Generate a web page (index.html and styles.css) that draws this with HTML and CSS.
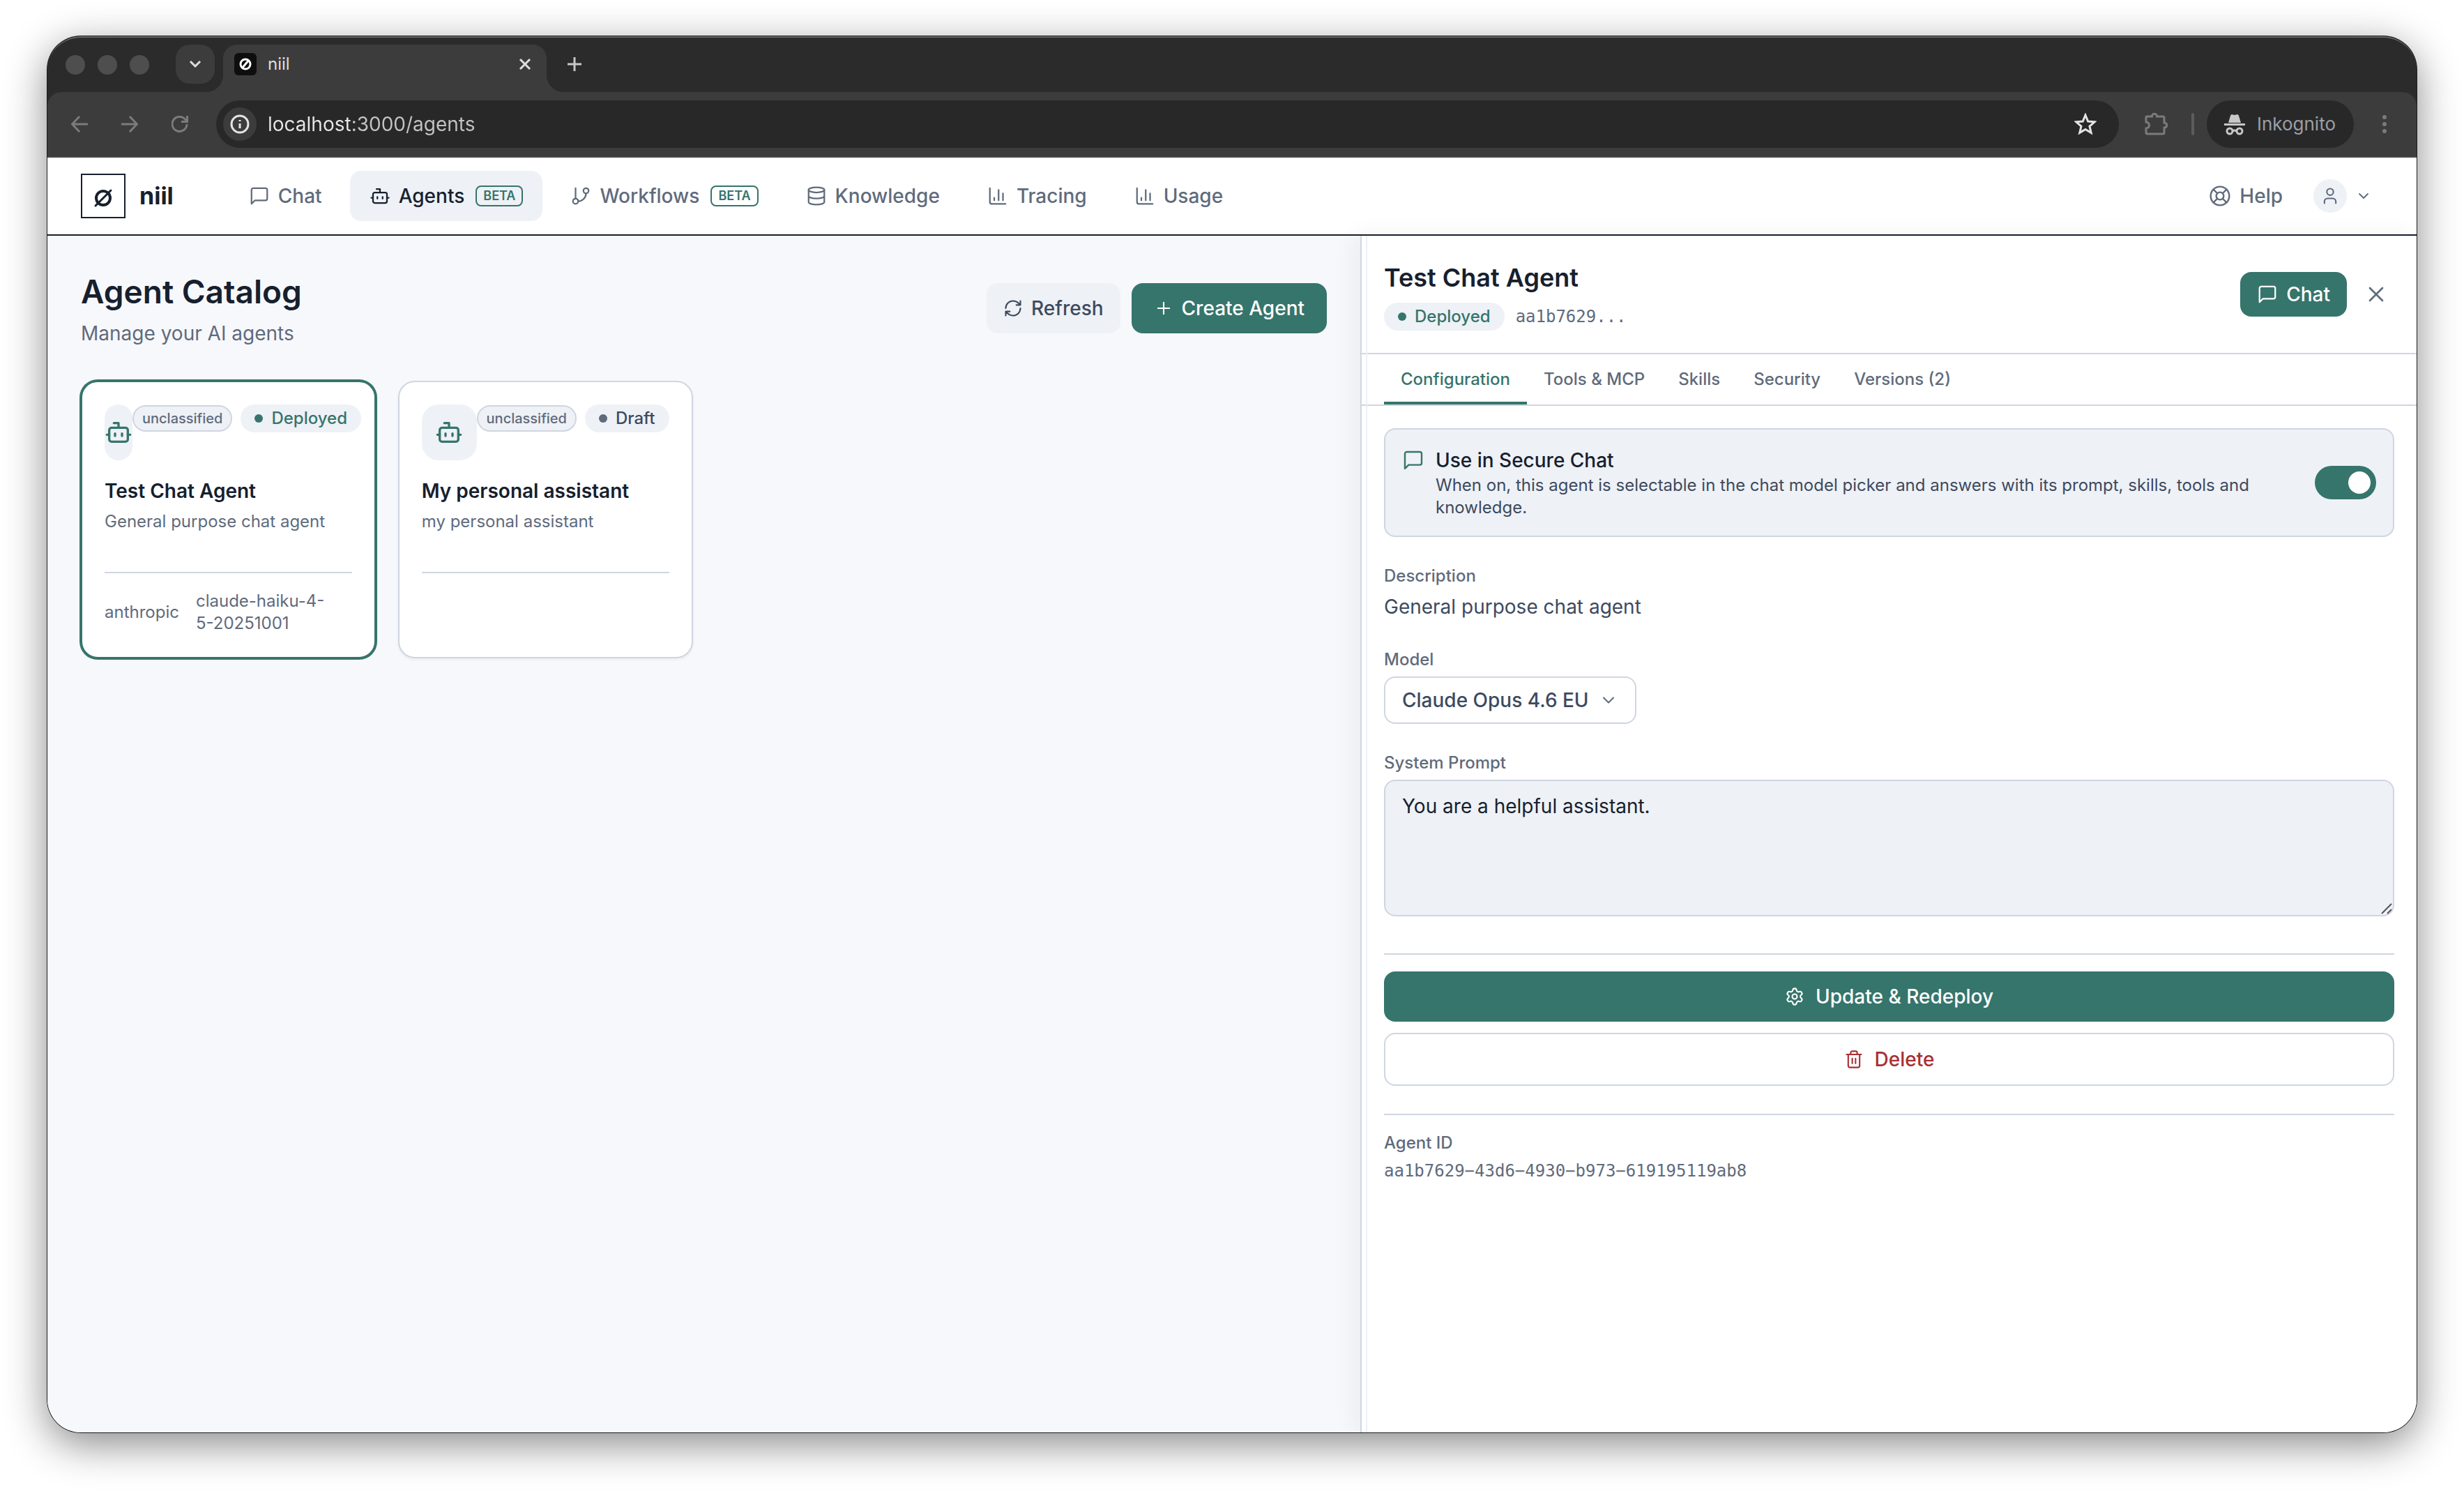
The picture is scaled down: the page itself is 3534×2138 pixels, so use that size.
FILE: index.html
```html
<!DOCTYPE html>
<html lang="en">
<head>
<meta charset="utf-8">
<title>niil</title>
<link rel="stylesheet" href="styles.css">
</head>
<body>
<svg class="sprite" aria-hidden="true">
  <symbol id="chat" viewBox="0 0 24 24"><path d="M21 15a2 2 0 0 1-2 2H7l-4 4V5a2 2 0 0 1 2-2h14a2 2 0 0 1 2 2z"/></symbol>
  <symbol id="bot" viewBox="0 0 24 24"><path d="M12 8V4H8"/><rect x="4" y="8" width="16" height="12" rx="2"/><path d="M2 14h2M20 14h2M15 13v2M9 13v2"/></symbol>
  <symbol id="branch" viewBox="0 0 24 24"><path d="M6 3v12"/><circle cx="18" cy="6" r="3"/><circle cx="6" cy="18" r="3"/><path d="M18 9a9 9 0 0 1-9 9"/></symbol>
  <symbol id="database" viewBox="0 0 24 24"><ellipse cx="12" cy="5" rx="9" ry="3"/><path d="M3 5v14a9 3 0 0 0 18 0V5M3 12a9 3 0 0 0 18 0"/></symbol>
  <symbol id="chart" viewBox="0 0 24 24"><path d="M3 3v16a2 2 0 0 0 2 2h16M18 17V9M13 17V5M8 17v-3"/></symbol>
  <symbol id="buoy" viewBox="0 0 24 24"><circle cx="12" cy="12" r="10"/><circle cx="12" cy="12" r="4"/><path d="m4.93 4.93 4.24 4.24M14.83 9.17l4.24-4.24M14.83 14.83l4.24 4.24M9.17 14.83l-4.24 4.24"/></symbol>
  <symbol id="user" viewBox="0 0 24 24"><path d="M19 21v-2a4 4 0 0 0-4-4H9a4 4 0 0 0-4 4v2"/><circle cx="12" cy="7" r="4"/></symbol>
  <symbol id="down" viewBox="0 0 24 24"><path d="m6 9 6 6 6-6"/></symbol>
  <symbol id="refresh" viewBox="0 0 24 24"><path d="M3 12a9 9 0 0 1 9-9 9.75 9.75 0 0 1 6.74 2.74L21 8M21 3v5h-5M21 12a9 9 0 0 1-9 9 9.75 9.75 0 0 1-6.74-2.74L3 16M8 16H3v5"/></symbol>
  <symbol id="plus" viewBox="0 0 24 24"><path d="M5 12h14M12 5v14"/></symbol>
  <symbol id="cross" viewBox="0 0 24 24"><path d="M18 6 6 18M6 6l12 12"/></symbol>
  <symbol id="gear" viewBox="0 0 24 24"><path d="M9.671 4.136a2.34 2.34 0 0 1 4.659 0 2.34 2.34 0 0 0 3.319 1.915 2.34 2.34 0 0 1 2.33 4.033 2.34 2.34 0 0 0 0 3.831 2.34 2.34 0 0 1-2.33 4.033 2.34 2.34 0 0 0-3.319 1.915 2.34 2.34 0 0 1-4.659 0 2.34 2.34 0 0 0-3.32-1.915 2.34 2.34 0 0 1-2.33-4.033 2.34 2.34 0 0 0 0-3.831A2.34 2.34 0 0 1 6.35 6.051a2.34 2.34 0 0 0 3.319-1.915"/><circle cx="12" cy="12" r="3"/></symbol>
  <symbol id="trash" viewBox="0 0 24 24"><path d="M3 6h18M19 6v14a2 2 0 0 1-2 2H7a2 2 0 0 1-2-2V6M8 6V4a2 2 0 0 1 2-2h4a2 2 0 0 1 2 2v2M10 11v6M14 11v6"/></symbol>
</svg>

<div class="window">
  <div class="tabstrip">
    <div class="lights"><span></span><span></span><span></span></div>
    <button class="tab-search" aria-label="Search tabs"><svg width="18" height="18" viewBox="0 0 18 18"><path d="m2 5 7 7 7-7"/></svg></button>
    <div class="tab">
      <svg class="favicon" viewBox="0 0 32 32"><rect width="32" height="32" rx="6"/><circle cx="16" cy="16" r="7"/><path d="m11 22 10-12"/></svg>
      <span class="tab-title">niil</span>
      <button class="plain" aria-label="Close tab"><svg width="18" height="18" viewBox="0 0 18 18"><path d="m2 2 14 14M16 2 2 16"/></svg></button>
    </div>
    <button class="plain new-tab" aria-label="New tab"><svg width="20" height="20" viewBox="0 0 20 20"><path d="M10 0v20M0 10h20"/></svg></button>
  </div>

  <div class="toolbar">
    <div class="history">
      <button class="plain" aria-label="Back"><svg width="24" height="24" viewBox="0 0 24 24"><path d="M24 12H2M12 1 1.500 12 12 23"/></svg></button>
      <button class="plain" aria-label="Forward"><svg width="24" height="24" viewBox="0 0 24 24"><path d="M0 12h22M12 1l10.500 11L12 23"/></svg></button>
      <button class="plain" aria-label="Reload"><svg width="24" height="24" viewBox="0 0 24 24"><path d="M22 12a10.500 10.500 0 1 1-3-7.500L22 7.500M22.500 0v8.500H14"/></svg></button>
    </div>
    <div class="omnibox">
      <button class="site-info" aria-label="Site information"><svg width="28" height="28" viewBox="0 0 28 28"><circle cx="14" cy="14" r="12"/><path d="M14 13v7M14 8v2"/></svg></button>
      <input class="url" type="text" aria-label="Address" value="localhost:3000/agents">
      <button class="plain star" aria-label="Bookmark"><svg width="32" height="32" viewBox="0 0 32 32"><path d="m16 3 3.700 9 9.500.8-7.200 6.200 2.200 9.400L16 23.400l-8.200 5 2.200-9.400-7.200-6.200 9.500-.8z"/></svg></button>
    </div>
    <button class="plain puzzle" aria-label="Extensions"><svg width="34" height="34" viewBox="0 0 34 34"><path d="M4 6h7.500c0-5 7-5 7 0H27q2 0 2 2v7c5 0 5 7 0 7v7q0 2-2 2H5q-2 0-2-2v-6c6-1 6-8 0-9V7q0-1 1-1z"/></svg></button>
    <span class="divider"></span>
    <button class="incognito"><svg width="32" height="32" viewBox="0 0 32 32"><path class="solid" d="M1 15h30v3H1zM7 14l3-10q1-3 4-1.500 2 .8 4 0Q21 1 22 4l3 10z"/><circle cx="9" cy="26" r="4"/><circle cx="23" cy="26" r="4"/><path d="M13 26q3-2 6 0"/></svg><span>Inkognito</span></button>
    <button class="plain dots" aria-label="Menu"><svg width="8" height="28" viewBox="0 0 8 28"><circle cx="4" cy="4" r="3"/><circle cx="4" cy="14" r="3"/><circle cx="4" cy="24" r="3"/></svg></button>
  </div>

  <header class="header">
    <a class="brand" href="#">
      <svg class="logo" viewBox="0 0 64 64"><rect x="1" y="1" width="62" height="62"/><ellipse cx="32" cy="35" rx="10" ry="10"/><path d="M21 46 43 24"/></svg>
      <span>niil</span>
    </a>
    <nav class="nav">
      <a href="#"><svg class="icon"><use href="#chat"/></svg>Chat</a>
      <a href="#" class="active"><svg class="icon"><use href="#bot"/></svg>Agents<span class="beta">BETA</span></a>
      <a href="#"><svg class="icon"><use href="#branch"/></svg>Workflows<span class="beta">BETA</span></a>
      <a href="#"><svg class="icon"><use href="#database"/></svg>Knowledge</a>
      <a href="#"><svg class="icon"><use href="#chart"/></svg>Tracing</a>
      <a href="#"><svg class="icon"><use href="#chart"/></svg>Usage</a>
    </nav>
    <a class="help" href="#"><svg class="icon roomy"><use href="#buoy"/></svg>Help</a>
    <button class="account" aria-label="Account">
      <span class="avatar"><svg class="icon small"><use href="#user"/></svg></span>
      <svg class="icon tiny"><use href="#down"/></svg>
    </button>
  </header>

  <div class="body">
    <main class="catalog">
      <div class="catalog-head">
        <div>
          <h1>Agent Catalog</h1>
          <p>Manage your AI agents</p>
        </div>
        <div class="catalog-actions">
          <button class="btn soft"><svg class="icon small"><use href="#refresh"/></svg>Refresh</button>
          <button class="btn primary"><svg class="icon small"><use href="#plus"/></svg>Create Agent</button>
        </div>
      </div>
      <div class="cards">
        <article class="card selected">
          <div class="card-top">
            <span class="card-icon"><svg class="icon large"><use href="#bot"/></svg></span>
            <span class="badges"><span class="tag">unclassified</span><span class="status live">Deployed</span></span>
          </div>
          <h2>Test Chat Agent</h2>
          <p class="desc">General purpose chat agent</p>
          <div class="card-foot"><span>anthropic</span><span>claude-haiku-4-<span class="keep">5-20251001</span></span></div>
        </article>
        <article class="card">
          <div class="card-top">
            <span class="card-icon"><svg class="icon large"><use href="#bot"/></svg></span>
            <span class="badges"><span class="tag">unclassified</span><span class="status">Draft</span></span>
          </div>
          <h2>My personal assistant</h2>
          <p class="desc">my personal assistant</p>
          <div class="card-foot"></div>
        </article>
      </div>
    </main>

    <aside class="panel">
      <div class="panel-head">
        <div class="panel-title">
          <h2>Test Chat Agent</h2>
          <div class="panel-meta"><span class="status live">Deployed</span><code>aa1b7629...</code></div>
        </div>
        <button class="btn primary compact"><svg class="icon"><use href="#chat"/></svg>Chat</button>
        <button class="close" aria-label="Close panel"><svg class="icon medium"><use href="#cross"/></svg></button>
      </div>
      <div class="tabs" role="tablist">
        <button role="tab" aria-selected="true">Configuration</button>
        <button role="tab">Tools &amp; MCP</button>
        <button role="tab">Skills</button>
        <button role="tab">Security</button>
        <button role="tab">Versions (2)</button>
      </div>
      <div class="panel-body">
        <div class="option">
          <svg class="icon roomy"><use href="#chat"/></svg>
          <label for="secure"><strong>Use in Secure Chat</strong><span>When on, this agent is selectable in the chat model picker and answers with its prompt, skills, tools and knowledge.</span></label>
          <input id="secure" class="switch" type="checkbox" role="switch" checked>
        </div>
        <div class="field">
          <span class="label">Description</span>
          <p>General purpose chat agent</p>
        </div>
        <div class="field">
          <label class="label" for="model">Model</label>
          <div class="select">
            <select id="model"><option>Claude Opus 4.6 EU</option></select>
            <svg class="icon small select-arrow"><use href="#down"/></svg>
          </div>
        </div>
        <div class="field">
          <label class="label" for="prompt">System Prompt</label>
          <div class="prompt">
            <textarea id="prompt">You are a helpful assistant.</textarea>
            <svg class="grip" width="18" height="18" viewBox="0 0 18 18"><path d="M2 16 16 2M10 16l6-6"/></svg>
          </div>
        </div>
        <div class="actions">
          <button class="btn primary wide"><svg class="icon small"><use href="#gear"/></svg>Update &amp; Redeploy</button>
          <button class="btn danger wide"><svg class="icon small"><use href="#trash"/></svg>Delete</button>
        </div>
        <div class="identity">
          <span class="label">Agent ID</span>
          <code>aa1b7629−43d6−4930−b973−619195119ab8</code>
        </div>
      </div>
    </aside>
  </div>
</div>
</body>
</html>
```

FILE: styles.css
```css
:root {
  --ink: #16202e;
  --text: #3d4a5e;
  --muted: #5f6b7c;
  --line: #cfd6e1;
  --soft: #eef1f6;
  --page: #f7f8fc;
  --green: #36756c;
  --red: #a82f32;
}

* { box-sizing: border-box; margin: 0; }

body {
  min-height: 100vh;
  padding: 52px 68px 84px;
  display: flex;
  background: #fff;
  color: var(--ink);
  font-family: Inter, "Liberation Sans", sans-serif;
  font-size: 28px;
  line-height: 40px;
}

button, input, select, textarea { font: inherit; color: inherit; }
button { border: 0; background: none; padding: 0; cursor: pointer; }
a { color: inherit; text-decoration: none; }
svg { fill: none; stroke: currentColor; display: block; flex-shrink: 0; }
code { font-family: "DejaVu Sans Mono", monospace; font-size: 24px; line-height: 32px; color: var(--muted); }

.sprite { position: absolute; width: 0; height: 0; }
.icon { width: 30px; height: 30px; stroke-width: 1.8; stroke-linecap: round; stroke-linejoin: round; }
.icon.tiny { width: 24px; height: 24px; }
.icon.small { width: 28px; height: 28px; }
.icon.roomy { width: 32px; height: 32px; }
.icon.medium { width: 36px; height: 36px; }
.icon.large { width: 40px; height: 40px; stroke-width: 2; }

/* Browser window */
.window {
  flex: 1;
  min-width: 0;
  display: flex;
  flex-direction: column;
  border-radius: 48px;
  overflow: hidden;
  background: #2b2b2b;
  box-shadow: 0 0 0 1px #1c1c1c, 0 16px 60px rgba(0, 0, 0, .48);
}

.tabstrip {
  height: 80px;
  padding: 10px 26px 0;
  display: flex;
  align-items: flex-start;
  border-top: 2px solid #666;
  border-radius: 48px 48px 0 0;
  color: #dedede;
}
.tabstrip svg, .toolbar svg { stroke-width: 3; }
.lights { display: flex; gap: 18px; padding-top: 15px; }
.lights span { width: 28px; height: 28px; border-radius: 50%; background: #4e4e4e; }
.tab-search {
  width: 56px;
  height: 56px;
  margin: 0 12px 0 38px;
  display: grid;
  place-items: center;
  border-radius: 20px;
  background: #3c3c3c;
}
.tab {
  position: relative;
  width: 464px;
  height: 68px;
  padding: 0 22px 12px 16px;
  display: flex;
  align-items: center;
  gap: 16px;
  border-radius: 20px 20px 0 0;
  background: #3c3c3c;
}
.tab::before, .tab::after {
  content: "";
  position: absolute;
  bottom: 0;
  width: 24px;
  height: 24px;
}
.tab::before { right: 100%; background: radial-gradient(circle at 0 0, transparent 24px, #3c3c3c 24px); }
.tab::after { left: 100%; background: radial-gradient(circle at 100% 0, transparent 24px, #3c3c3c 24px); }
.favicon { width: 32px; height: 32px; }
.favicon rect { fill: #0e0e0e; stroke: none; }
.favicon circle, .favicon path { stroke: #fff; }
.tab-title { flex: 1; font-size: 24px; line-height: 32px; }
.plain { display: grid; place-items: center; }
.new-tab { width: 56px; height: 56px; margin-left: 12px; color: #c7c7c7; }

.toolbar {
  height: 94px;
  padding: 0 34px;
  display: flex;
  align-items: center;
  border-radius: 20px 20px 0 0;
  border-bottom: 2px solid #474747;
  background: #3c3c3c;
  color: #7b7b7b;
}
.history { display: flex; gap: 48px; margin-right: 40px; }
.history .plain { width: 24px; }
.omnibox {
  flex: 1;
  height: 68px;
  padding: 0 32px 0 10px;
  display: flex;
  align-items: center;
  gap: 16px;
  border-radius: 34px;
  background: #282828;
  color: #e3e3e3;
}
.site-info { width: 48px; height: 48px; display: grid; place-items: center; border-radius: 50%; background: #3c3c3c; }
.url {
  flex: 1;
  min-width: 0;
  padding: 0;
  border: 0;
  color: transparent;
  background: linear-gradient(to right, #e8e8e8 120px, #c4c4c4 120px);
  background-clip: text;
}
.puzzle { margin-left: 36px; }
.divider { width: 4px; height: 32px; margin: 0 18px 0 34px; border-radius: 2px; background: #5c5c5c; }
.incognito {
  height: 68px;
  padding: 0 26px 0 24px;
  display: flex;
  align-items: center;
  gap: 16px;
  border-radius: 34px;
  background: #282828;
  color: #9a9fa6;
  font-size: 26px;
}
.incognito svg { color: #c7c7c7; }
.solid, .dots circle { fill: currentColor; stroke: none; }
.dots { width: 24px; margin-left: 32px; }

/* Application header */
.header {
  height: 112px;
  padding: 0 64px 0 48px;
  display: flex;
  align-items: center;
  border-bottom: 2px solid var(--ink);
  background: #fff;
  color: var(--muted);
  font-weight: 500;
}
.brand { display: flex; align-items: center; gap: 20px; margin-right: 80px; color: var(--ink); font-size: 34px; font-weight: 700; }
.logo { width: 64px; height: 64px; stroke-width: 2; }
.logo ellipse, .logo path { stroke-width: 4; stroke-linecap: round; }
.logo path { stroke-width: 3; }
.nav { flex: 1; display: flex; gap: 12px; }
.nav a { height: 72px; padding: 0 28px; display: flex; align-items: center; gap: 12px; border-radius: 16px; }
.nav .active { background: var(--soft); color: var(--ink); }
.beta {
  margin-left: 4px;
  padding: 0 9px;
  border: 2px solid var(--green);
  border-radius: 8px;
  color: var(--green);
  font-size: 18px;
  font-weight: 600;
  line-height: 26px;
}
.help { display: flex; align-items: center; gap: 12px; margin-right: 44px; }
.account { display: flex; align-items: center; gap: 12px; color: var(--muted); }
.avatar { width: 48px; height: 48px; display: grid; place-items: center; border-radius: 50%; background: var(--soft); }

/* Catalog */
.body { flex: 1; display: grid; grid-template-columns: 1883fr 1515fr; background: #fff; }
.catalog { padding: 48px; background: var(--page); }
.catalog-head { display: flex; justify-content: space-between; align-items: center; margin-bottom: 48px; }
h1 { font-size: 46px; font-weight: 600; line-height: 64px; }
.catalog-head p { margin-top: 8px; color: var(--muted); }
.catalog-actions { display: flex; gap: 16px; }

.btn {
  height: 72px;
  padding: 0 24px;
  display: flex;
  align-items: center;
  justify-content: center;
  gap: 12px;
  border-radius: 16px;
  font-weight: 500;
}
.btn.soft { background: var(--soft); color: var(--text); }
.btn.primary { padding: 0 32px; background: var(--green); color: #fff; }
.btn.compact { height: 64px; padding: 0 24px; }
.btn.wide { width: 100%; gap: 16px; }
.btn.danger { height: 76px; border: 2px solid var(--line); background: #fff; color: var(--red); }

.cards { display: grid; grid-template-columns: repeat(4, minmax(0, 1fr)); gap: 32px; }
.card {
  padding: 32px;
  border: 2px solid var(--line);
  border-radius: 24px;
  background: #fff;
  box-shadow: 0 2px 4px rgba(22, 32, 46, .06);
}
.card.selected { border-color: var(--green); box-shadow: 0 0 0 2px var(--green); }
.card-top { display: flex; justify-content: space-between; align-items: flex-start; margin-bottom: 24px; }
.card-icon { width: 80px; height: 80px; display: flex; align-items: center; justify-content: center; border-radius: 24px; background: var(--soft); color: var(--green); }
.badges { display: flex; align-items: center; gap: 12px; }
.tag {
  padding: 2px 12px;
  border: 2px solid var(--line);
  border-radius: 20px;
  background: var(--soft);
  color: var(--muted);
  font-size: 20px;
  font-weight: 500;
  line-height: 30px;
}
.status {
  padding: 4px 20px;
  display: inline-flex;
  align-items: center;
  gap: 12px;
  border-radius: 20px;
  background: var(--soft);
  color: var(--text);
  font-size: 24px;
  font-weight: 500;
  line-height: 32px;
}
.status::before { content: ""; width: 12px; height: 12px; border-radius: 50%; background: var(--muted); }
.status.live { color: var(--green); }
.status.live::before { background: var(--green); }
.card h2 { font-size: 28px; font-weight: 600; line-height: 40px; }
.desc { min-height: 64px; margin: 8px 0 24px; color: var(--muted); font-size: 24px; line-height: 32px; }
.card-foot {
  padding-top: 24px;
  display: flex;
  align-items: center;
  gap: 24px;
  border-top: 2px solid var(--line);
  color: var(--muted);
  font-size: 24px;
  line-height: 32px;
}
.keep { display: inline-block; white-space: nowrap; }

/* Detail panel */
.panel { position: relative; border-left: 2px solid var(--line); background: #fff; box-shadow: -8px 0 32px rgba(22, 32, 46, .06); }
.panel::before { content: ""; position: absolute; top: 0; bottom: 0; left: 6px; width: 2px; background: #eceff4; }
.panel-head { padding: 32px; display: flex; align-items: center; gap: 16px; border-bottom: 2px solid var(--line); }
.panel-title { flex: 1; }
.panel h2 { font-size: 36px; font-weight: 600; line-height: 56px; }
.panel-meta { display: flex; align-items: center; gap: 16px; margin-top: 8px; }
.close { padding: 8px; color: var(--muted); }
.tabs { padding: 0 32px; display: flex; border-bottom: 2px solid var(--line); }
.tabs button {
  height: 72px;
  padding: 0 24px;
  border-top: 4px solid transparent;
  border-bottom: 4px solid transparent;
  color: var(--muted);
  font-size: 24px;
  font-weight: 500;
}
.tabs [aria-selected="true"] { color: var(--green); border-bottom-color: var(--green); }
.panel-body { padding: 32px; display: flex; flex-direction: column; gap: 40px; }
.option {
  padding: 24px;
  display: flex;
  align-items: center;
  gap: 16px;
  border: 2px solid var(--line);
  border-radius: 16px;
  background: var(--soft);
}
.option .icon { align-self: flex-start; margin-top: 4px; color: var(--green); }
.option label { flex: 1; margin-right: 8px; }
.option strong { display: block; font-weight: 500; }
.option label span { display: block; color: var(--text); font-size: 24px; line-height: 32px; }
.switch {
  width: 88px;
  height: 48px;
  padding: 8px;
  display: flex;
  justify-content: flex-end;
  appearance: none;
  border-radius: 24px;
  background: var(--green);
}
.switch::before { content: ""; width: 32px; height: 32px; border-radius: 50%; background: #fff; }
.field, .identity { display: flex; flex-direction: column; gap: 8px; }
.label { color: var(--muted); font-size: 24px; font-weight: 500; line-height: 32px; }
.field p { color: var(--text); }
.select { position: relative; align-self: flex-start; }
.select select {
  height: 68px;
  padding: 0 66px 0 24px;
  display: block;
  appearance: none;
  border: 2px solid var(--line);
  border-radius: 16px;
  background: #fff;
  color: var(--text);
  font-weight: 500;
}
.select-arrow { position: absolute; top: 20px; right: 26px; color: var(--muted); pointer-events: none; }
.prompt { position: relative; }
.prompt textarea {
  width: 100%;
  height: 196px;
  padding: 16px 24px;
  display: block;
  resize: none;
  border: 2px solid var(--line);
  border-radius: 16px;
  background: var(--soft);
}
.grip { position: absolute; right: 2px; bottom: 2px; color: #555; stroke-width: 2; }
.actions { margin-top: 13px; padding-top: 24px; display: flex; flex-direction: column; gap: 16px; border-top: 2px solid var(--line); }
.identity { padding-top: 24px; border-top: 2px solid var(--line); }
```
